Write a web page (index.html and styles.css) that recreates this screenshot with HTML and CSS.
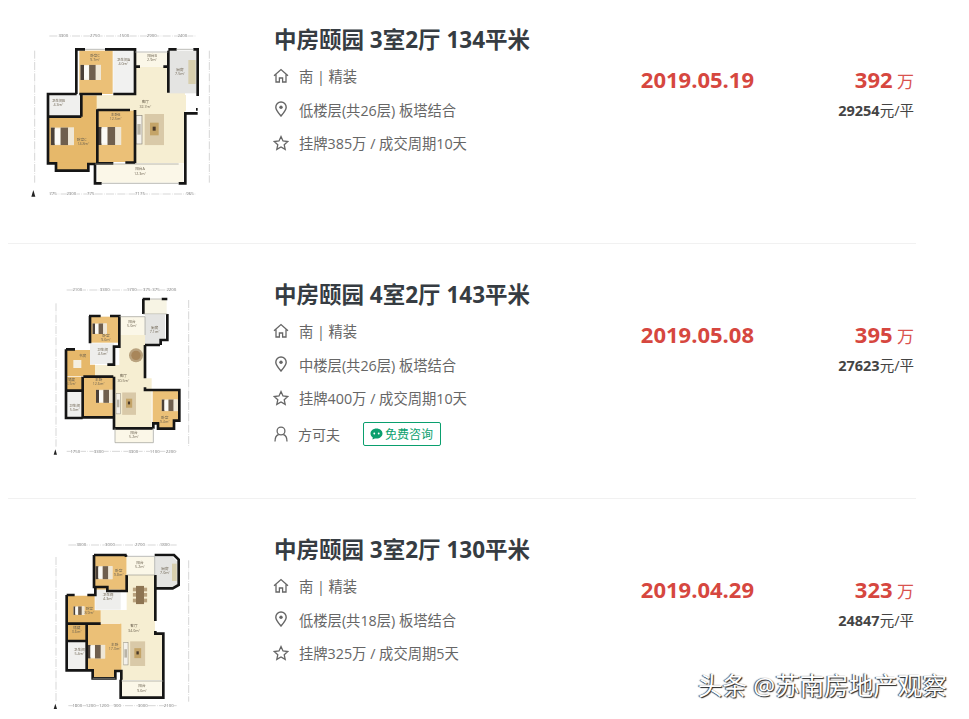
FILE: index.html
```html
<!DOCTYPE html>
<html lang="zh-CN">
<head>
  <meta charset="UTF-8" />
  <meta name="viewport" content="width=device-width, initial-scale=1.0" />
  <title>中房颐园 成交记录</title>
  <link rel="stylesheet" href="styles.css">
</head>
<body>
  <svg class="defs" width="0" height="0" aria-hidden="true">
    <defs>
      <symbol id="i-home" viewBox="0 0 16 16">
        <path d="M1 7.8 8 1.600l7 6.200M3 6.600V14h3.400v-4h3.200v4H13V6.600" fill="none" stroke="#666" stroke-width="1.300" />
      </symbol>
      <symbol id="i-pin" viewBox="0 0 16 16">
        <path d="M8 15C5 11.500 2.800 9 2.800 6.200a5.200 5.200 0 0 1 10.400 0C13.200 9 11 11.500 8 15Z" fill="none" stroke="#666" stroke-width="1.400" />
        <circle cx="8" cy="6.200" r="1.700" fill="#666" />
      </symbol>
      <symbol id="i-star" viewBox="0 0 16 16">
        <path d="M8 1.600 10 6l4.800.5-3.600 3.200 1 4.700L8 12l-4.200 2.400 1-4.700L1.200 6.500 6 6Z" fill="none" stroke="#666" stroke-width="1.300" />
      </symbol>
      <symbol id="i-user" viewBox="0 0 16 16">
        <circle cx="8" cy="5" r="3.900" fill="none" stroke="#666" stroke-width="1.300" />
        <path d="M2 15.500c0-4 1.800-6.500 3.700-7M14 15.500c0-4-1.800-6.500-3.700-7" fill="none" stroke="#666" stroke-width="1.300" />
      </symbol>
      <symbol id="bed" viewBox="0 0 80 60">
        <rect width="80" height="60" fill="#f6f1e6" />
        <rect x="0" y="0" width="14" height="60" fill="#4a4038" />
        <rect x="14" y="5" width="18" height="50" fill="#fbfaf6" />
        <rect x="34" y="0" width="26" height="60" fill="#6f5f4e" />
        <rect x="60" y="0" width="20" height="60" fill="#efe7d6" />
      </symbol>
      <symbol id="sofa" viewBox="0 0 84 94">
        <rect x="26" y="0" width="58" height="94" fill="#d9c9a8" />
        <rect x="42" y="26" width="26" height="38" fill="#c4a468" />
        <rect x="50" y="38" width="9" height="12" fill="#4a3a2a" />
        <rect x="0" y="4" width="18" height="86" fill="#f4f1ea" stroke="#8a8578" stroke-width="2" />
        <rect x="4" y="30" width="10" height="32" fill="#b9b4a6" />
      </symbol>
      <symbol id="dining" viewBox="0 0 44 56">
        <rect x="0" y="6" width="11" height="11" fill="#b9a27e" />
        <rect x="0" y="22" width="11" height="11" fill="#b9a27e" />
        <rect x="0" y="39" width="11" height="11" fill="#b9a27e" />
        <rect x="33" y="6" width="11" height="11" fill="#b9a27e" />
        <rect x="33" y="22" width="11" height="11" fill="#b9a27e" />
        <rect x="33" y="39" width="11" height="11" fill="#b9a27e" />
        <rect x="10" y="0" width="24" height="56" fill="#8d7452" />
      </symbol>
    </defs>
  </svg>

  <ul class="house-list">
    <li class="house">
      <svg class="plan" viewBox="0 0 630 570" role="img" aria-label="户型图">
        <g class="dims">
          <path d="M88 48H528M88 522H528M44 92V488M568 92V488" />
        </g>
        <g class="dim-text">
          <text x="130" y="52">3300</text><text x="225" y="52">2750</text><text x="313" y="52">1500</text><text x="395" y="52">2900</text><text x="487" y="52">2400</text>
          <text x="99" y="526">775</text><text x="154" y="526">2300</text><text x="212" y="526">775</text><text x="360" y="526">7175</text><text x="510" y="526">965</text>
        </g>
        <path d="M40 510l6 20h-12Z" fill="#222" />
        <rect x="345" y="140" width="150" height="290" fill="#f6eed2" />
        <rect x="228" y="225" width="270" height="48" fill="#f6eed2" />
        <rect x="178" y="92" width="100" height="130" fill="#ebc077" />
        <rect x="280" y="92" width="66" height="130" fill="#f1f1f0" />
        <rect x="348" y="98" width="94" height="42" fill="#fbf7e8" />
        <rect x="445" y="92" width="84" height="128" fill="#e4e4e2" />
        <rect x="84" y="222" width="100" height="68" fill="#f0f0ee" />
        <rect x="186" y="226" width="44" height="66" fill="#e6b86a" />
        <rect x="86" y="290" width="144" height="140" fill="#e6b86a" />
        <rect x="108" y="428" width="98" height="24" fill="#e6b86a" />
        <rect x="232" y="272" width="114" height="154" fill="#ebc077" />
        <rect x="232" y="432" width="258" height="56" fill="#fbf7e8" />
        <use href="#bed" x="172" y="134" width="80" height="46" />
        <use href="#bed" x="92" y="318" width="70" height="62" />
        <use href="#bed" x="232" y="316" width="72" height="64" />
        <use href="#sofa" x="348" y="282" width="84" height="94" />
        <rect x="505" y="120" width="22" height="72" fill="#d8cfae" />
        <g class="walls">
          <path d="M169 222V88H195M255 88H345V96M345 96V222H280M345 140H360M430 140H445M445 218V92M445 88H470M520 88H533V228M528 268H533M533 280H496V432M178 222H246M84 290H184M184 222V290M84 222H170M84 218V430H108V452H205V432H225V490H245M232 268V430H280M316 428H345M232 270H330M345 270V430M476 490H496V432" />
        </g>
        <path class="thin" d="M245 490H476M225 432H476M345 96H445M195 88H255M470 88H520" />
        <g class="room-text">
          <text x="225" y="110">卧室C</text><text x="310" y="122">卫生间A</text><text x="396" y="112">阳台B</text><text x="480" y="152">厨房</text><text x="376" y="250">客厅</text><text x="115" y="245">卫生间B</text><text x="185" y="362">卧室C</text><text x="287" y="287">主卧B</text><text x="360" y="450">阳台A</text>
          <text x="225" y="122">9.7m²</text><text x="310" y="134">4.0m²</text><text x="396" y="124">2.9m²</text><text x="480" y="164">7.5m²</text><text x="376" y="263">32.7m²</text><text x="115" y="258">4.3m²</text><text x="190" y="376">14.8m²</text><text x="287" y="300">12.5m²</text><text x="360" y="466">12.3m²</text>
        </g>
      </svg>
      <div class="info">
        <h2 class="title">中房颐园 3室2厅 134平米</h2>
        <p class="line"><svg class="ico"><use href="#i-home" /></svg>南 | 精装</p>
        <p class="line"><svg class="ico"><use href="#i-pin" /></svg>低楼层(共26层) 板塔结合</p>
        <p class="line"><svg class="ico"><use href="#i-star" /></svg>挂牌385万 / 成交周期10天</p>
      </div>
      <div class="date">2019.05.19</div>
      <div class="price">
        <div class="total"><b>392</b> 万</div>
        <div class="unit"><b>29254</b>元/平</div>
      </div>
    </li>

    <li class="house">
      <svg class="plan" viewBox="-30 -15 630 570" role="img" aria-label="户型图">
        <g class="dims">
          <path d="M110 30H440M110 514H440M78 70V500M476 60V500" />
        </g>
        <g class="dim-text">
          <text x="142" y="34">2100</text><text x="224" y="34">3300</text><text x="305" y="34">1700</text><text x="350" y="34">375</text><text x="378" y="34">375</text><text x="424" y="34">2200</text>
          <text x="136" y="518">1750</text><text x="206" y="518">3300</text><text x="310" y="518">3300</text><text x="374" y="518">1100</text><text x="422" y="518">2200</text>
        </g>
        <path d="M76 508l5 16h-10Z" fill="#222" />
        <path d="M268 165H345V295H365V445H255V295H195V255H268Z" fill="#f6eed2" />
        <rect x="340" y="58" width="70" height="44" fill="#f7f4e4" />
        <rect x="180" y="110" width="88" height="78" fill="#ebc077" />
        <rect x="268" y="110" width="76" height="55" fill="#fbf7e8" />
        <path d="M345 105H405V180H390V195H345Z" fill="#e4e4e2" />
        <rect x="180" y="190" width="72" height="62" fill="#eeeeec" />
        <path d="M108 210H180V254H195V288H108Z" fill="#e6b86a" />
        <rect x="108" y="290" width="50" height="40" fill="#e6b86a" />
        <rect x="108" y="332" width="50" height="80" fill="#f0f0ee" />
        <rect x="160" y="290" width="92" height="120" fill="#ebc077" />
        <path d="M368 332H446V422H430V446H384V430H368Z" fill="#ebc077" />
        <rect x="256" y="446" width="112" height="42" fill="#fbf7e8" />
        <use href="#bed" x="182" y="130" width="54" height="32" />
        <use href="#bed" x="394" y="358" width="50" height="36" />
        <use href="#bed" x="198" y="326" width="52" height="46" />
        <rect x="130" y="240" width="24" height="24" fill="#f4efe0" />
        <circle cx="318" cy="226" r="21" fill="#b9a27e" />
        <circle cx="318" cy="226" r="14" fill="#a8865a" />
        <use href="#sofa" x="258" y="335" width="60" height="72" />
        <g class="walls">
          <path d="M177 108H212M240 108H268V200H252V254H232M180 108V190M108 208V414H158M108 208H135M158 290V412M108 332H158M158 412H252M252 290V445H368M345 195V295M345 322V330H448V422H432V446H384V430H370V446M345 195H390M412 102V180H392V195M338 57H360M395 57H412M340 57V102M160 290H250" />
        </g>
        <path class="thin" d="M268 110H345V165M255 445V488H370V445M340 102H412M360 57H395" />
        <g class="room-text">
          <text x="228" y="172">卧室</text><text x="306" y="130">阳台</text><text x="374" y="146">厨房</text><text x="218" y="214">卫生间</text><text x="158" y="232">书房</text><text x="124" y="302">储藏</text><text x="134" y="382">卫生间</text><text x="206" y="304">主卧</text><text x="280" y="292">客厅</text><text x="404" y="418">卧室</text><text x="312" y="462">阳台</text>
          <text x="228" y="184">9.6m²</text><text x="306" y="142">5.0m²</text><text x="374" y="158">7.1m²</text><text x="218" y="226">4.5m²</text><text x="124" y="314">3.5m²</text><text x="134" y="394">5.0m²</text><text x="206" y="316">12.6m²</text><text x="280" y="305">30.5m²</text><text x="404" y="430">9.4m²</text><text x="312" y="474">5.2m²</text>
        </g>
      </svg>
      <div class="info">
        <h2 class="title">中房颐园 4室2厅 143平米</h2>
        <p class="line"><svg class="ico"><use href="#i-home" /></svg>南 | 精装</p>
        <p class="line"><svg class="ico"><use href="#i-pin" /></svg>中楼层(共26层) 板塔结合</p>
        <p class="line"><svg class="ico"><use href="#i-star" /></svg>挂牌400万 / 成交周期10天</p>
        <p class="line agent">
          <svg class="ico"><use href="#i-user" /></svg><span class="agent-name">方可夫</span>
          <a class="consult" href="#">
            <svg class="bubble" viewBox="0 0 14 13"><path d="M7 .5C3.300.5.500 2.900.500 6c0 1.800 1 3.300 2.500 4.300L2.600 12.500 5.200 11.300c.6.100 1.200.200 1.800.200 3.700 0 6.500-2.400 6.500-5.500S10.700.5 7 .5Z" fill="#0a9f6e" /><circle cx="4.600" cy="6" r="1" fill="#fff" /><circle cx="9.400" cy="6" r="1" fill="#fff" /></svg>免费咨询
          </a>
        </p>
      </div>
      <div class="date">2019.05.08</div>
      <div class="price">
        <div class="total"><b>395</b> 万</div>
        <div class="unit"><b>27623</b>元/平</div>
      </div>
    </li>

    <li class="house">
      <svg class="plan" viewBox="-30 -15 630 570" role="img" aria-label="户型图">
        <g class="dims">
          <path d="M115 30H440M115 512H440M78 66V500M476 76V500" />
        </g>
        <g class="dim-text">
          <text x="154" y="34">3000</text><text x="240" y="34">3000</text><text x="330" y="34">2700</text><text x="404" y="34">1800</text>
          <text x="142" y="516">1800</text><text x="182" y="516">1200</text><text x="222" y="516">1200</text><text x="262" y="516">900</text><text x="338" y="516">3000</text><text x="416" y="516">2100</text>
        </g>
        <path d="M76 506l5 16h-10Z" fill="#222" />
        <path d="M290 120H375V295H398V436H275V410H270V265H212V225H290Z" fill="#f6eed2" />
        <rect x="194" y="62" width="96" height="106" fill="#ebc077" />
        <rect x="290" y="66" width="82" height="54" fill="#fbf7e8" />
        <path d="M375 66H428L442 80V150L425 158H375Z" fill="#e4e4e2" />
        <rect x="196" y="164" width="76" height="60" fill="#eeeeec" />
        <path d="M112 182H194V226H212V264H112Z" fill="#e6b86a" />
        <rect x="112" y="266" width="58" height="50" fill="#e6b86a" />
        <rect x="112" y="318" width="58" height="86" fill="#f0f0ee" />
        <path d="M172 266H274V408H256V428H190V406H172Z" fill="#ebc077" />
        <rect x="274" y="438" width="124" height="48" fill="#fbf7e8" />
        <use href="#bed" x="196" y="90" width="52" height="46" />
        <use href="#bed" x="130" y="204" width="34" height="46" />
        <use href="#bed" x="172" y="328" width="54" height="44" />
        <use href="#dining" x="308" y="152" width="44" height="56" />
        <use href="#sofa" x="280" y="318" width="66" height="76" />
        <rect x="426" y="86" width="14" height="52" fill="#d8cfae" />
        <g class="walls">
          <path d="M192 60H290M192 60V156H232V168H290V120M288 60V66M374 60H432L446 74V150L428 160H376V258M376 288V296H400V488H272V434M110 180H134M172 180H196V160M110 180V406H172M110 266H212M170 266V404M110 318H170M172 406H188V430H256V408H274V434M376 160V120" />
        </g>
        <path class="thin" d="M290 64H374V120M290 120H374M188 430H256M274 438H400" />
        <g class="room-text">
          <text x="266" y="112">卧室</text><text x="330" y="86">阳台</text><text x="405" y="106">厨房</text><text x="234" y="184">卫生间</text><text x="178" y="226">卧室</text><text x="140" y="282">储藏</text><text x="148" y="348">卫生间</text><text x="254" y="332">主卧</text><text x="312" y="277">客厅</text><text x="336" y="456">阳台</text>
          <text x="266" y="124">9.8m²</text><text x="330" y="98">5.2m²</text><text x="405" y="118">7.0m²</text><text x="234" y="196">4.3m²</text><text x="178" y="238">8.9m²</text><text x="140" y="294">3.6m²</text><text x="148" y="360">5.4m²</text><text x="254" y="344">17.3m²</text><text x="312" y="290">34.0m²</text><text x="336" y="470">9.6m²</text>
        </g>
      </svg>
      <div class="info">
        <h2 class="title">中房颐园 3室2厅 130平米</h2>
        <p class="line"><svg class="ico"><use href="#i-home" /></svg>南 | 精装</p>
        <p class="line"><svg class="ico"><use href="#i-pin" /></svg>低楼层(共18层) 板塔结合</p>
        <p class="line"><svg class="ico"><use href="#i-star" /></svg>挂牌325万 / 成交周期5天</p>
      </div>
      <div class="date">2019.04.29</div>
      <div class="price">
        <div class="total"><b>323</b> 万</div>
        <div class="unit"><b>24847</b>元/平</div>
      </div>
    </li>
  </ul>

  <div class="watermark">头条 @苏南房地产观察</div>
</body>
</html>
```

FILE: styles.css
```css
html, body {
  height: 100%;
}

body {
  margin: 0;
  background: #fff;
  color: #333;
  font-family: "Open Sans", "Noto Sans CJK SC", sans-serif;
  overflow: hidden;
  position: relative;
}

.defs {
  position: absolute;
}

.house-list {
  list-style: none;
  margin: 0 0 0 8px;
  padding: 0;
  width: 908px;
}

.house {
  display: flex;
  box-sizing: border-box;
  height: 255px;
  padding-top: 31px;
  border-bottom: 1px solid #f1f1f1;
}

.house:first-child {
  height: 244px;
  padding-top: 20px;
}

.house:last-child {
  border-bottom: none;
}

.plan {
  flex: none;
  width: 210px;
  height: 190px;
  margin-left: 12px;
  filter: blur(0.6px);
}

.dims path {
  fill: none;
  stroke: #999;
  stroke-width: 1.2;
  stroke-dasharray: 24 4 2 4;
}

.dim-text text {
  fill: #777;
  font-size: 13px;
  text-anchor: middle;
  stroke: #fff;
  stroke-width: 3px;
  paint-order: stroke;
}

.walls path {
  fill: none;
  stroke: #151515;
  stroke-width: 8;
}

.thin {
  fill: none;
  stroke: #9a9a92;
  stroke-width: 2;
}

.room-text text {
  fill: #6c6250;
  font-size: 11px;
  text-anchor: middle;
}

.info {
  flex: none;
  width: 365px;
  margin-left: 45px;
  padding-top: 7px;
}

.title {
  margin: 0 0 6px -1px;
  font-size: 22.5px;
  line-height: 26px;
  font-weight: 700;
  color: #363c42;
}

.line {
  display: flex;
  align-items: center;
  margin: 0;
  height: 33.5px;
  font-size: 14.3px;
  color: #666;
}

.ico {
  flex: none;
  width: 16px;
  height: 16px;
  margin: 0 10px 0 -2px;
}

.agent {
  height: 36px;
  margin-top: 1px;
}

.agent-name {
  margin-left: -1px;
  width: 65px;
  font-size: 14px;
}

.consult {
  display: flex;
  align-items: center;
  box-sizing: border-box;
  height: 24px;
  width: 78px;
  padding-left: 6px;
  border: 1px solid #0a9f6e;
  border-radius: 2px;
  font-size: 12px;
  color: #0a9f6e;
  text-decoration: none;
}

.bubble {
  width: 13px;
  height: 12px;
  margin-right: 2px;
}

.date {
  flex: none;
  width: 114px;
  padding-top: 44px;
  font-size: 22px;
  line-height: 30px;
  font-weight: 700;
  color: #d6473f;
  text-align: right;
}

.price {
  flex: none;
  width: 160px;
  padding-top: 44px;
  text-align: right;
}

.total {
  font-size: 17px;
  line-height: 30px;
  color: #d9534f;
}

.total b {
  font-size: 22px;
  color: #d6473f;
}

.unit {
  margin-top: 5px;
  font-size: 14.5px;
  line-height: 18px;
  color: #444;
}

.watermark {
  position: absolute;
  left: 698px;
  top: 671px;
  font-size: 24.5px;
  line-height: 30px;
  color: #fff;
  text-shadow: 1px 1px 1px #222, -1px 0 1px #444;
  white-space: nowrap;
}
```
